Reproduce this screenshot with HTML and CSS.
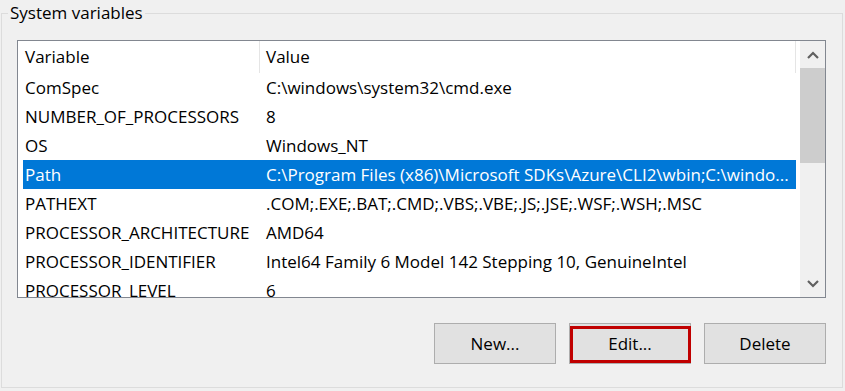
FILE: index.html
```html
<!DOCTYPE html>
<html>
<head>
    <meta charset="UTF-8">
    <title>System variables</title>
    <link rel="stylesheet" href="styles.css">
</head>
<body>
    <div class="group">
        <span class="group-title">System variables</span>

        <div class="listbox">
            <div class="list">
                <div class="list-head">
                    <div class="head-name">Variable</div>
                    <div class="head-value">Value</div>
                </div>
                <div class="row">
                    <div class="cell-name">ComSpec</div>
                    <div class="cell-value">C:\windows\system32\cmd.exe</div>
                </div>
                <div class="row">
                    <div class="cell-name">NUMBER_OF_PROCESSORS</div>
                    <div class="cell-value">8</div>
                </div>
                <div class="row">
                    <div class="cell-name">OS</div>
                    <div class="cell-value">Windows_NT</div>
                </div>
                <div class="row selected">
                    <div class="cell-name">Path</div>
                    <div class="cell-value">C:\Program Files (x86)\Microsoft SDKs\Azure\CLI2\wbin;C:\windo...</div>
                </div>
                <div class="row">
                    <div class="cell-name">PATHEXT</div>
                    <div class="cell-value">.COM;.EXE;.BAT;.CMD;.VBS;.VBE;.JS;.JSE;.WSF;.WSH;.MSC</div>
                </div>
                <div class="row">
                    <div class="cell-name">PROCESSOR_ARCHITECTURE</div>
                    <div class="cell-value">AMD64</div>
                </div>
                <div class="row">
                    <div class="cell-name">PROCESSOR_IDENTIFIER</div>
                    <div class="cell-value">Intel64 Family 6 Model 142 Stepping 10, GenuineIntel</div>
                </div>
                <div class="row">
                    <div class="cell-name">PROCESSOR_LEVEL</div>
                    <div class="cell-value">6</div>
                </div>
            </div>

            <!-- vertical scrollbar -->
            <div class="scrollbar">
                <div class="scroll-btn">
                    <svg width="12" height="8" viewBox="0 0 12 8"><path d="M1 7 L6 2 L11 7" fill="none" stroke="#606060" stroke-width="2.2"/></svg>
                </div>
                <div class="scroll-track">
                    <div class="scroll-thumb"></div>
                </div>
                <div class="scroll-btn">
                    <svg width="12" height="8" viewBox="0 0 12 8"><path d="M1 1 L6 6 L11 1" fill="none" stroke="#606060" stroke-width="2.2"/></svg>
                </div>
            </div>
        </div>

        <div class="buttons">
            <button type="button" class="btn">New...</button>
            <button type="button" class="btn btn-marked">Edit...</button>
            <button type="button" class="btn">Delete</button>
        </div>
    </div>
</body>
</html>
```

FILE: styles.css
```css
body {
    margin: 0;
    padding: 0;
    background-color: #f0f0f0;
    font-family: "Open Sans", "Noto Sans", sans-serif;
    font-size: 17px;
    color: #000;
}

.group {
    position: relative;
    margin: 13px 2px 0 1px;
    height: 375px;
    border: 1px solid #dcdcdc;
    padding: 26px 16px 0 15px;
    box-sizing: border-box;
}

.group-title {
    position: absolute;
    top: -13px;
    left: 6px;
    padding: 0 2px;
    background-color: #f0f0f0;
    line-height: 24px;
}

.listbox {
    display: flex;
    height: 258px;
    border: 1px solid #828790;
    background-color: #fff;
    box-sizing: border-box;
}

.list {
    flex: 1;
    padding: 0 4px 0 5px;
    overflow: hidden;
}

.list-head {
    display: flex;
    height: 32px;
    line-height: 32px;
}

.head-name {
    width: 234px;
    padding-left: 2px;
    border-right: 1px solid #e5e5e5;
}

.head-value {
    flex: 1;
    padding-left: 6px;
    border-right: 1px solid #e5e5e5;
}

.row {
    display: flex;
    height: 29px;
    line-height: 29px;
    white-space: nowrap;
}

.row.selected {
    background-color: #0078d7;
    color: #fff;
}

.cell-name {
    width: 239px;
    padding-left: 2px;
    flex-shrink: 0;
}

.cell-value {
    flex: 1;
    padding-left: 2px;
    overflow: hidden;
}

.scrollbar {
    width: 25px;
    display: flex;
    flex-direction: column;
    background-color: #f0f0f0;
}

.scroll-btn {
    height: 27px;
    display: flex;
    align-items: center;
    justify-content: center;
}

.scroll-track {
    flex: 1;
}

.scroll-thumb {
    height: 95px;
    background-color: #cdcdcd;
}

.buttons {
    display: flex;
    justify-content: flex-end;
    gap: 13px;
    margin-top: 25px;
}

.btn {
    position: relative;
    width: 122px;
    height: 41px;
    background-color: #e1e1e1;
    border: 1px solid #adadad;
    font-family: "Open Sans", "Noto Sans", sans-serif;
    font-size: 17px;
    color: #000;
    padding: 0;
}

/* red highlight drawn over the Edit button */
.btn-marked::after {
    content: "";
    position: absolute;
    top: 2px;
    left: 0;
    right: -1px;
    bottom: 0;
    border: 3px solid #c00000;
}
```
